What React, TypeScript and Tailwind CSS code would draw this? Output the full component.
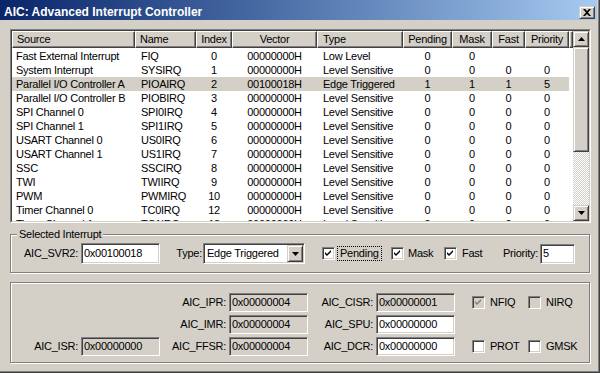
import React from "react"

type Row = {
  src: string
  name: string
  idx: string
  vec: string
  type: string
  p: string
  m: string
  f: string
  pr: string
  sel?: boolean
}

const rows: Row[] = [
  { src: "Fast External Interrupt", name: "FIQ", idx: "0", vec: "00000000H", type: "Low Level", p: "0", m: "0", f: "", pr: "" },
  { src: "System Interrupt", name: "SYSIRQ", idx: "1", vec: "00000000H", type: "Level Sensitive", p: "0", m: "0", f: "0", pr: "0" },
  { src: "Parallel I/O Controller A", name: "PIOAIRQ", idx: "2", vec: "00100018H", type: "Edge Triggered", p: "1", m: "1", f: "1", pr: "5", sel: true },
  { src: "Parallel I/O Controller B", name: "PIOBIRQ", idx: "3", vec: "00000000H", type: "Level Sensitive", p: "0", m: "0", f: "0", pr: "0" },
  { src: "SPI Channel 0", name: "SPI0IRQ", idx: "4", vec: "00000000H", type: "Level Sensitive", p: "0", m: "0", f: "0", pr: "0" },
  { src: "SPI Channel 1", name: "SPI1IRQ", idx: "5", vec: "00000000H", type: "Level Sensitive", p: "0", m: "0", f: "0", pr: "0" },
  { src: "USART Channel 0", name: "US0IRQ", idx: "6", vec: "00000000H", type: "Level Sensitive", p: "0", m: "0", f: "0", pr: "0" },
  { src: "USART Channel 1", name: "US1IRQ", idx: "7", vec: "00000000H", type: "Level Sensitive", p: "0", m: "0", f: "0", pr: "0" },
  { src: "SSC", name: "SSCIRQ", idx: "8", vec: "00000000H", type: "Level Sensitive", p: "0", m: "0", f: "0", pr: "0" },
  { src: "TWI", name: "TWIIRQ", idx: "9", vec: "00000000H", type: "Level Sensitive", p: "0", m: "0", f: "0", pr: "0" },
  { src: "PWM", name: "PWMIRQ", idx: "10", vec: "00000000H", type: "Level Sensitive", p: "0", m: "0", f: "0", pr: "0" },
  { src: "Timer Channel 0", name: "TC0IRQ", idx: "12", vec: "00000000H", type: "Level Sensitive", p: "0", m: "0", f: "0", pr: "0" },
  { src: "Timer Channel 1", name: "TC1IRQ", idx: "13", vec: "00000000H", type: "Level Sensitive", p: "0", m: "0", f: "0", pr: "0" },
]

// win2000 bevels
const sunken =
  "border border-t-[#808080] border-l-[#808080] border-r-white border-b-white shadow-[inset_1px_1px_0_#404040,inset_-1px_-1px_0_#d4d0c8]"
const button =
  "border border-t-[#d4d0c8] border-l-[#d4d0c8] border-r-[#404040] border-b-[#404040] shadow-[inset_1px_1px_0_#fff,inset_-1px_-1px_0_#808080]"
const headCell =
  "h-[17px] leading-[15px] border border-t-white border-l-white border-r-[#404040] border-b-[#404040] shadow-[inset_-1px_-1px_0_#808080] bg-[#d4d0c8] whitespace-nowrap overflow-hidden"
const etched = "border border-[#808080] shadow-[inset_1px_1px_0_#fff,1px_1px_0_#fff]"

function Check({ checked, disabled }: { checked?: boolean; disabled?: boolean }) {
  return (
    <span
      className={`w-[13px] h-[13px] shrink-0 flex items-center justify-center ${sunken} ${
        disabled ? "bg-[#d4d0c8]" : "bg-white"
      }`}
    >
      {checked && (
        <svg width="7" height="7" viewBox="0 0 7 7">
          <path d="M0 2L2 4L6 0V2L2 6L0 4Z" fill={disabled ? "#808080" : "#000"} />
        </svg>
      )}
    </span>
  )
}

function Field({ value, gray, className }: { value: string; gray?: boolean; className: string }) {
  return (
    <div className={`${className} ${sunken} ${gray ? "bg-[#d4d0c8]" : "bg-white"} pl-[2px] flex items-center`}>
      {value}
    </div>
  )
}

function Arrow({ down }: { down?: boolean }) {
  return (
    <svg width="7" height="4" viewBox="0 0 7 4">
      <path d={down ? "M0 0H7L3.5 4Z" : "M0 4H7L3.5 0Z"} fill="#000" />
    </svg>
  )
}

function RegField({ label, value, gray }: { label: string; value: string; gray?: boolean }) {
  return (
    <>
      <span>{label}</span>
      <Field value={value} gray={gray} className="ml-[3px] w-[79px] h-[19px]" />
    </>
  )
}

export default function App() {
  return (
    <div className="w-[600px] h-[373px] bg-[#d4d0c8] text-black text-[11px] tracking-[-0.25px] font-['Liberation_Sans',Arial,sans-serif] shadow-[inset_-1px_-1px_0_#404040,inset_-2px_-2px_0_#808080] overflow-hidden select-none">
      {/* title bar */}
      <div className="w-[597px] h-[20px] flex items-start justify-between bg-gradient-to-r from-[#0a246a] to-[#a6caf0]">
        <span className="pl-[4px] pt-[5px] leading-[14px] text-[12px] font-bold tracking-normal text-white">
          AIC: Advanced Interrupt Controller
        </span>
        <div className={`mt-[6px] mr-[2px] w-[16px] h-[13px] bg-[#d4d0c8] ${button} flex items-center justify-center`}>
          <svg width="8" height="7" viewBox="0 0 8 7">
            <path d="M0 0H2L4 2L6 0H8L5 3.5L8 7H6L4 5L2 7H0L3 3.5Z" fill="#000" />
          </svg>
        </div>
      </div>

      <div className="pl-[10px] pt-[9px]">
        {/* list view */}
        <div className="w-[581px] h-[194px] border border-t-[#808080] border-l-[#808080] border-r-white border-b-white">
          <div className="w-full h-full border border-t-[#404040] border-l-[#404040] border-r-[#d4d0c8] border-b-[#d4d0c8] bg-white flex">
            <div className="w-[561px] h-full overflow-hidden">
              <div className="flex">
                <div className={`w-[123px] pl-[4px] ${headCell}`}>Source</div>
                <div className={`w-[61px] pl-[4px] ${headCell}`}>Name</div>
                <div className={`w-[36px] text-center ${headCell}`}>Index</div>
                <div className={`w-[85px] text-center ${headCell}`}>Vector</div>
                <div className={`w-[86px] pl-[5px] ${headCell}`}>Type</div>
                <div className={`w-[49px] text-center ${headCell}`}>Pending</div>
                <div className={`w-[40px] text-center ${headCell}`}>Mask</div>
                <div className={`w-[33px] text-center ${headCell}`}>Fast</div>
                <div className={`w-[44px] text-center ${headCell}`}>Priority</div>
                <div className={`flex-1 ${headCell}`}></div>
              </div>
              <div className="pt-[1px]">
                {rows.map((r) => (
                  <div
                    key={r.idx}
                    className={`w-[557px] h-[14px] leading-[14px] flex whitespace-nowrap ${r.sel ? "bg-[#d4d0c8]" : ""}`}
                  >
                    <div className="w-[123px] pl-[4px]">{r.src}</div>
                    <div className="w-[61px] pl-[6px]">{r.name}</div>
                    <div className="w-[36px] text-center">{r.idx}</div>
                    <div className="w-[85px] text-center">{r.vec}</div>
                    <div className="w-[86px] pl-[6px]">{r.type}</div>
                    <div className="w-[49px] text-center">{r.p}</div>
                    <div className="w-[40px] text-center">{r.m}</div>
                    <div className="w-[33px] text-center">{r.f}</div>
                    <div className="w-[44px] text-center">{r.pr}</div>
                  </div>
                ))}
              </div>
            </div>
            {/* scrollbar */}
            <div className="w-[16px] h-full flex flex-col">
              <div className={`h-[16px] bg-[#d4d0c8] ${button} flex items-center justify-center`}>
                <Arrow />
              </div>
              <div className={`h-[105px] bg-[#d4d0c8] ${button}`}></div>
              <div className="flex-1 bg-[repeating-conic-gradient(#fff_0%_25%,#d4d0c8_0%_50%)] bg-[length:2px_2px]"></div>
              <div className={`h-[16px] bg-[#d4d0c8] ${button} flex items-center justify-center`}>
                <Arrow down />
              </div>
            </div>
          </div>
        </div>

        {/* selected interrupt */}
        <div className={`relative mt-[11px] w-[580px] h-[39px] ${etched} flex items-center`}>
          <span className="absolute -top-[8px] left-[6px] px-[2px] bg-[#d4d0c8] leading-[14px]">
            Selected Interrupt
          </span>
          <span className="w-[67px] text-right">AIC_SVR2:</span>
          <Field value="0x00100018" className="ml-[3px] w-[79px] h-[21px]" />
          <span className="w-[42px] text-right">Type:</span>
          <div className={`ml-[1px] w-[102px] h-[21px] p-[1px] ${sunken} bg-white flex items-center`}>
            <span className="flex-1 pl-[2px] whitespace-nowrap">Edge Triggered</span>
            <div className={`w-[16px] h-full bg-[#d4d0c8] ${button} flex items-center justify-center`}>
              <Arrow down />
            </div>
          </div>
          <div className="ml-[17px] w-[69px] flex items-center">
            <Check checked />
            <span className="ml-[2px] px-[2px] leading-[13px] border border-dotted border-black">Pending</span>
          </div>
          <div className="w-[53px] flex items-center">
            <Check checked />
            <span className="ml-[4px]">Mask</span>
          </div>
          <div className="w-[59px] flex items-center">
            <Check checked />
            <span className="ml-[5px]">Fast</span>
          </div>
          <span className="w-[37px]">Priority:</span>
          <Field value="5" className="w-[35px] h-[20px]" />
        </div>

        {/* registers */}
        <div className={`mt-[9px] w-[580px] h-[81px] ${etched} pt-[10px] flex flex-col gap-[3px]`}>
          <div className="h-[19px] flex items-center">
            <div className="w-[149px]"></div>
            <div className="w-[148px] flex items-center justify-end">
              <RegField label="AIC_IPR:" value="0x00000004" gray />
            </div>
            <div className="w-[147px] flex items-center justify-end">
              <RegField label="AIC_CISR:" value="0x00000001" gray />
            </div>
            <div className="pl-[17px] flex items-center">
              <div className="w-[56px] flex items-center">
                <Check checked disabled />
                <span className="ml-[5px]">NFIQ</span>
              </div>
              <div className="flex items-center">
                <Check disabled />
                <span className="ml-[5px]">NIRQ</span>
              </div>
            </div>
          </div>
          <div className="h-[19px] flex items-center">
            <div className="w-[149px]"></div>
            <div className="w-[148px] flex items-center justify-end">
              <RegField label="AIC_IMR:" value="0x00000004" gray />
            </div>
            <div className="w-[147px] flex items-center justify-end">
              <RegField label="AIC_SPU:" value="0x00000000" />
            </div>
          </div>
          <div className="h-[19px] flex items-center">
            <div className="w-[149px] flex items-center justify-end">
              <RegField label="AIC_ISR:" value="0x00000000" gray />
            </div>
            <div className="w-[148px] flex items-center justify-end">
              <RegField label="AIC_FFSR:" value="0x00000004" gray />
            </div>
            <div className="w-[147px] flex items-center justify-end">
              <RegField label="AIC_DCR:" value="0x00000000" />
            </div>
            <div className="pl-[17px] flex items-center">
              <div className="w-[56px] flex items-center">
                <Check />
                <span className="ml-[5px]">PROT</span>
              </div>
              <div className="flex items-center">
                <Check />
                <span className="ml-[5px]">GMSK</span>
              </div>
            </div>
          </div>
        </div>
      </div>
    </div>
  )
}
